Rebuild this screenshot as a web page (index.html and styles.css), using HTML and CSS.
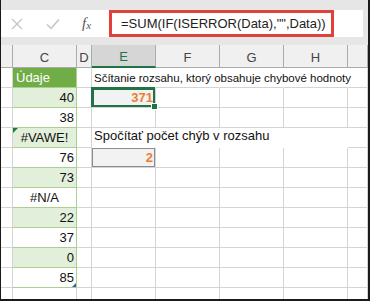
FILE: index.html
```html
<!DOCTYPE html>
<html>
<head>
    <meta charset="utf-8">
    <title>Súčet s chybami</title>
    <link rel="stylesheet" href="styles.css">
</head>
<body>
<div class="frame">
    <div class="ribbon">
        <div class="formula-bar">
            <div class="bar-icons">
                <svg class="icon-cancel" width="12" height="12" viewBox="0 0 12 12">
                    <path d="M1 1 L11 11 M11 1 L1 11" stroke="#c4c4c4" stroke-width="1.3" fill="none"/>
                </svg>
                <svg class="icon-enter" width="14" height="12" viewBox="0 0 14 12">
                    <path d="M1 6.5 L5 10.5 L13 1.5" stroke="#c4c4c4" stroke-width="1.5" fill="none"/>
                </svg>
                <span class="fx">f<sub>x</sub></span>
            </div>
            <div class="formula">=SUM(IF(ISERROR(Data),"",Data))</div>
        </div>
    </div>
    <table class="sheet">
        <colgroup>
            <col class="w-b"><col class="w-c"><col class="w-d"><col class="w-e">
            <col class="w-e"><col class="w-e"><col class="w-e"><col class="w-i">
        </colgroup>
        <tr class="head">
            <td></td><td>C</td><td>D</td><td class="active">E</td><td>F</td><td>G</td><td>H</td><td></td>
        </tr>
        <tr>
            <td></td><td class="data title">Údaje</td><td></td>
            <td class="note open">Sčítanie rozsahu, ktorý obsahuje chybové hodnoty</td>
            <td class="open"></td><td class="open"></td><td class="open"></td><td></td>
        </tr>
        <tr>
            <td></td><td class="data alt">40</td><td></td>
            <td class="result selected">371<span class="handle"></span></td>
            <td></td><td></td><td></td><td></td>
        </tr>
        <tr>
            <td></td><td class="data">38</td><td></td><td></td><td></td><td></td><td></td><td></td>
        </tr>
        <tr>
            <td></td><td class="data alt err flagged">#VAWE!</td><td></td>
            <td class="note big blank">Spočítať počet chýb v rozsahu</td>
            <td class="blank"></td><td class="blank"></td><td class="blank"></td><td></td>
        </tr>
        <tr>
            <td></td><td class="data">76</td><td></td>
            <td class="result boxed">2</td>
            <td></td><td></td><td></td><td></td>
        </tr>
        <tr>
            <td></td><td class="data alt">73</td><td></td><td></td><td></td><td></td><td></td><td></td>
        </tr>
        <tr>
            <td></td><td class="data err">#N/A</td><td></td><td></td><td></td><td></td><td></td><td></td>
        </tr>
        <tr>
            <td></td><td class="data alt">22</td><td></td><td></td><td></td><td></td><td></td><td></td>
        </tr>
        <tr>
            <td></td><td class="data">37</td><td></td><td></td><td></td><td></td><td></td><td></td>
        </tr>
        <tr>
            <td></td><td class="data alt">0</td><td></td><td></td><td></td><td></td><td></td><td></td>
        </tr>
        <tr>
            <td></td><td class="data last">85<span class="corner"></span></td><td></td><td></td><td></td><td></td><td></td><td></td>
        </tr>
        <tr class="stub">
            <td></td><td></td><td></td><td></td><td></td><td></td><td></td><td></td>
        </tr>
    </table>
</div>
</body>
</html>
```

FILE: styles.css
```css
body {
    margin: 0;
    font-family: "Liberation Sans", Arial, sans-serif;
}

.frame {
    width: 370px;
    height: 301px;
    box-sizing: border-box;
    border-left: 1px solid #1a1a1a;
    border-right: 2px solid #1a1a1a;
    border-bottom: 2px solid #1a1a1a;
    overflow: hidden;
    background: #fff;
}

.ribbon {
    height: 45px;
    padding-top: 10px;
    box-sizing: border-box;
    background: #e6e6e6;
}

.formula-bar {
    display: flex;
    width: 362px;
    height: 27px;
    background: #fff;
}

.bar-icons {
    width: 108px;
    display: flex;
    align-items: center;
}

.icon-cancel {
    margin-left: 10px;
}

.icon-enter {
    margin-left: 23px;
}

.fx {
    margin-left: 22px;
    font-family: "Liberation Serif", serif;
    font-style: italic;
    font-size: 15px;
    color: #595959;
}

.fx sub {
    font-size: 11px;
    vertical-align: -1px;
}

.formula {
    width: 225px;
    box-sizing: border-box;
    border: 3px solid #e0413b;
    padding-left: 9px;
    font-size: 13px;
    line-height: 21px;
    color: #222;
    white-space: nowrap;
}

.sheet {
    border-collapse: separate;
    border-spacing: 0;
    table-layout: fixed;
    width: 367px;
}

.w-b { width: 12px; }
.w-c { width: 64px; }
.w-d { width: 15px; }
.w-e { width: 64px; }
.w-i { width: 20px; }

.sheet td {
    box-sizing: border-box;
    height: 20px;
    padding: 0 2px;
    border-right: 1px solid #d4d4d4;
    border-bottom: 1px solid #d4d4d4;
    font-size: 13px;
    color: #111;
    white-space: nowrap;
    overflow: visible;
}

.sheet .head td {
    height: 23px;
    background: #f0f0f0;
    border-right-color: #ababab;
    border-bottom-color: #ababab;
    text-align: center;
    font-size: 13px;
    color: #444;
    padding-top: 2px;
}

.sheet .head td.active {
    background: #d6d6d6;
    color: #217346;
    border-bottom: 2px solid #217346;
}

.sheet td.data {
    text-align: right;
    border-right-color: #a9d08e;
    border-bottom-color: #a9d08e;
    position: relative;
}

.sheet td.alt {
    background: #e2efda;
}

.sheet td.title {
    background: #70ad47;
    color: #fff;
    text-align: left;
    padding-left: 3px;
}

.sheet td.err {
    text-align: center;
}

.flagged::before {
    content: "";
    position: absolute;
    left: 0;
    top: 0;
    border-top: 5px solid #1e7b34;
    border-right: 5px solid transparent;
}

.corner {
    position: absolute;
    right: 0;
    bottom: 0;
    border-bottom: 4px solid #3d5ab8;
    border-left: 4px solid transparent;
}

.sheet td.note {
    font-size: 11.5px;
    padding-left: 2px;
    overflow: visible;
}

.sheet td.big {
    font-size: 13px;
    vertical-align: top;
}

.sheet td.open {
    border-right-color: transparent;
}

.sheet td.blank {
    border-right-color: transparent;
    border-bottom-color: transparent;
}

.sheet td.result {
    background: #f2f2f2;
    text-align: right;
    font-weight: bold;
    font-size: 13px;
    color: #ed7d31;
    position: relative;
}

.sheet td.selected {
    box-shadow: inset 0 0 0 2px #217346, -1px -1px 0 0 #217346;
}

.handle {
    position: absolute;
    right: -3px;
    bottom: -3px;
    width: 5px;
    height: 5px;
    background: #217346;
    border: 1px solid #fff;
}

.sheet td.boxed {
    box-shadow: inset 0 0 0 1px #8c8c8c;
}

.sheet .stub td {
    height: 12px;
}
```
